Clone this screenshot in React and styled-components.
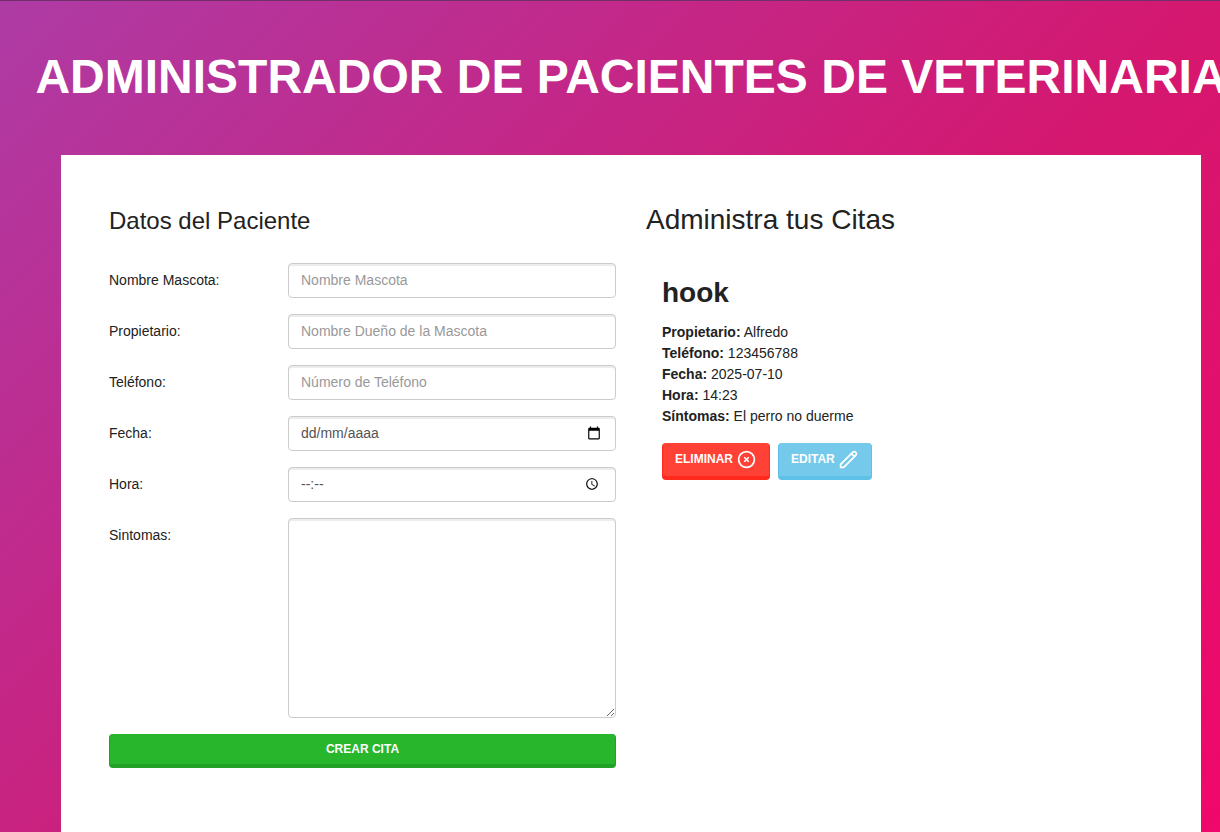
import { useState } from "react";
import styled, { createGlobalStyle } from "styled-components";

const cita = {
    mascota: "hook",
    propietario: "Alfredo",
    telefono: "123456788",
    fecha: "2025-07-10",
    hora: "14:23",
    sintomas: "El perro no duerme",
};

export default function App() {
    const [citas, setCitas] = useState([cita]);

    return (
        <>
            <GlobalStyle />
            <Page>
                <Title>Administrador de Pacientes de Veterinaria</Title>
                <Container>
                    <Formulario />
                    <section>
                        <CitasTitle>Administra tus Citas</CitasTitle>
                        {citas.map((item) => (
                            <Cita key={item.mascota} cita={item} onDelete={() => setCitas([])} />
                        ))}
                    </section>
                </Container>
            </Page>
        </>
    );
}

function Formulario() {
    return (
        <form onSubmit={(e) => e.preventDefault()}>
            <FormTitle>Datos del Paciente</FormTitle>
            <Row>
                <Label htmlFor="mascota">Nombre Mascota:</Label>
                <Control>
                    <Input id="mascota" type="text" placeholder="Nombre Mascota" />
                </Control>
            </Row>
            <Row>
                <Label htmlFor="propietario">Propietario:</Label>
                <Control>
                    <Input id="propietario" type="text" placeholder="Nombre Dueño de la Mascota" />
                </Control>
            </Row>
            <Row>
                <Label htmlFor="telefono">Teléfono:</Label>
                <Control>
                    <Input id="telefono" type="tel" placeholder="Número de Teléfono" />
                </Control>
            </Row>
            <Row>
                <Label htmlFor="fecha">Fecha:</Label>
                <Control>
                    <Input id="fecha" type="text" placeholder="dd/mm/aaaa" $dark />
                    <PickerButton type="button" aria-label="Elegir fecha">
                        <CalendarIcon />
                    </PickerButton>
                </Control>
            </Row>
            <Row>
                <Label htmlFor="hora">Hora:</Label>
                <Control>
                    <Input id="hora" type="text" placeholder="--:--" $dark />
                    <PickerButton type="button" aria-label="Elegir hora" $end>
                        <ClockIcon />
                    </PickerButton>
                </Control>
            </Row>
            <Row>
                <Label htmlFor="sintomas">Sintomas:</Label>
                <TextArea id="sintomas" />
            </Row>
            <SubmitButton type="submit">Crear Cita</SubmitButton>
        </form>
    );
}

function Cita({ cita, onDelete }) {
    return (
        <CitaCard>
            <Mascota>{cita.mascota}</Mascota>
            <Dato><b>Propietario:</b> {cita.propietario}</Dato>
            <Dato><b>Teléfono:</b> {cita.telefono}</Dato>
            <Dato><b>Fecha:</b> {cita.fecha}</Dato>
            <Dato><b>Hora:</b> {cita.hora}</Dato>
            <Dato><b>Síntomas:</b> {cita.sintomas}</Dato>
            <Actions>
                <ActionButton type="button" $bg="#ff4136" $edge="#ff291d" onClick={onDelete}>
                    Eliminar
                    <ActionIcon viewBox="0 0 24 24">
                        <path d="M10 14l2-2m0 0l2-2m-2 2l-2-2m2 2l2 2m7-2a9 9 0 11-18 0 9 9 0 0118 0z" />
                    </ActionIcon>
                </ActionButton>
                <ActionButton type="button" $bg="#75caeb" $edge="#5fc1e8">
                    Editar
                    <ActionIcon viewBox="0 0 24 24">
                        <path d="M15.232 5.232l3.536 3.536m-2.036-5.036a2.5 2.5 0 113.536 3.536L6.5 21.036H3v-3.572L16.732 3.732z" />
                    </ActionIcon>
                </ActionButton>
            </Actions>
        </CitaCard>
    );
}

function CalendarIcon() {
    return (
        <svg width="14" height="14" viewBox="0 0 24 24" fill="#000">
            <path d="M20 3h-1V1h-2v2H7V1H5v2H4c-1.1 0-2 .9-2 2v16c0 1.1.9 2 2 2h16c1.1 0 2-.9 2-2V5c0-1.1-.9-2-2-2zm0 18H4V8h16v13z" />
        </svg>
    );
}

function ClockIcon() {
    return (
        <svg width="14" height="14" viewBox="0 0 24 24" fill="#000">
            <path d="M11.99 2C6.47 2 2 6.48 2 12s4.47 10 9.99 10C17.52 22 22 17.52 22 12S17.52 2 11.99 2zM12 20c-4.42 0-8-3.58-8-8s3.58-8 8-8 8 3.58 8 8-3.58 8-8 8z" />
            <path d="M12.5 7H11v6l5.25 3.15.75-1.23-4.5-2.67z" />
        </svg>
    );
}

const GlobalStyle = createGlobalStyle`
  *, *::before, *::after {
    box-sizing: border-box;
  }
  body {
    margin: 0;
    overflow-x: hidden;
    color: #222;
    font-family: "Liberation Sans", Arial, sans-serif;
    font-size: 14px;
    line-height: 21px;
  }
  button, input, textarea {
    font-family: inherit;
  }
`;

const Page = styled.main`
  display: flex;
  flex-direction: column;
  min-height: 100vh;
  padding: 0 19px 0 61px;
  overflow: hidden;
  border-top: 1px solid #6f2f68;
  background: linear-gradient(135deg, #ae3ba5, #d5176f 60%, #f0086a);
`;

const Title = styled.h1`
  display: flex;
  justify-content: center;
  margin: 48px 0;
  padding-bottom: 2px;
  color: white;
  font-size: 48px;
  line-height: 56px;
  text-transform: uppercase;
  white-space: nowrap;
`;

const Container = styled.div`
  display: grid;
  flex-grow: 1;
  grid-template-columns: 1fr 1fr;
  gap: 30px;
  padding: 48px;
  background-color: white;
`;

const FormTitle = styled.h2`
  margin: 0 0 24px;
  font-size: 24px;
  font-weight: 400;
  line-height: 36px;
`;

const CitasTitle = styled.h2`
  margin: 0 0 24px;
  font-size: 28px;
  font-weight: 400;
  line-height: 33px;
`;

const Row = styled.div`
  display: grid;
  grid-template-columns: repeat(3, 1fr);
  column-gap: 30px;
  margin-bottom: 16px;
`;

const Label = styled.label`
  padding: 7px 0;
`;

const Control = styled.div`
  display: flex;
  align-items: center;
  grid-column: span 2;
  height: 35px;
  border: 1px solid #ccc;
  border-radius: 4px;
  box-shadow: inset 0 2px 0 rgba(0, 0, 0, 0.075);
`;

const Input = styled.input`
  flex: 1;
  min-width: 0;
  padding: 6px 12px;
  border: 0;
  outline: 0;
  background: transparent;
  color: #555;
  font-size: 14px;
  line-height: 21px;

  &::placeholder {
    color: ${({ $dark }) => ($dark ? "#555" : "#999")};
    opacity: 1;
  }
`;

const PickerButton = styled.button`
  display: flex;
  padding: 0 0 2px;
  margin-right: ${({ $end }) => ($end ? "16px" : "14px")};
  border: 0;
  background: none;
`;

const TextArea = styled.textarea`
  grid-column: span 2;
  height: 200px;
  padding: 6px 12px;
  border: 1px solid #ccc;
  border-radius: 4px;
  box-shadow: inset 0 2px 0 rgba(0, 0, 0, 0.075);
  color: #555;
  font-size: 14px;
  line-height: 21px;
  resize: vertical;
`;

const Button = styled.button`
  border-style: solid;
  border-width: 0 1px 4px;
  border-radius: 4px;
  color: white;
  font-size: 12px;
  font-weight: 700;
  text-transform: uppercase;
  cursor: pointer;
`;

const SubmitButton = styled(Button)`
  width: 100%;
  padding: 6px 12px;
  border-color: #23a127;
  background-color: #28b62c;
  line-height: 18px;
`;

const CitaCard = styled.article`
  padding: 16px;
`;

const Mascota = styled.h3`
  margin: 0 0 12px;
  font-size: 28px;
  line-height: 34px;
`;

const Dato = styled.p`
  margin: 0;
`;

const Actions = styled.div`
  display: flex;
  gap: 8px;
  margin-top: 16px;
`;

const ActionButton = styled(Button)`
  display: flex;
  align-items: center;
  gap: 3px;
  padding: 6px 12px;
  border-color: ${({ $edge }) => $edge};
  background-color: ${({ $bg }) => $bg};
  line-height: 21px;
`;

const ActionIcon = styled.svg`
  width: 21px;
  height: 21px;
  fill: none;
  stroke: currentColor;
  stroke-width: 2;
  stroke-linecap: round;
  stroke-linejoin: round;
`;
